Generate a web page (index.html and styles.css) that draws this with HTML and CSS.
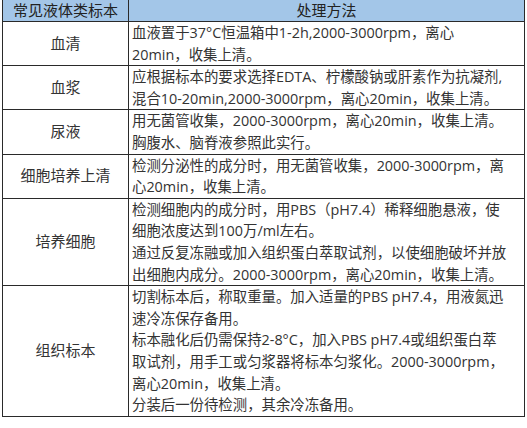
FILE: index.html
```html
<!DOCTYPE html>
<html lang="zh">
<head>
<meta charset="utf-8">
<link rel="stylesheet" href="styles.css">
</head>
<body>
<table class="spec">
  <colgroup><col class="c1"><col class="c2"></colgroup>
  <thead>
    <tr><th>常见液体类标本</th><th>处理方法</th></tr>
  </thead>
  <tbody>
    <tr><td class="name">血清</td><td class="desc">血液置于37°C恒温箱中1-2h,2000-3000rpm，离心<br>20min，收集上清。</td></tr>
    <tr><td class="name">血浆</td><td class="desc">应根据标本的要求选择EDTA、柠檬酸钠或肝素作为抗凝剂,<br>混合10-20min,2000-3000rpm，离心20min，收集上清。</td></tr>
    <tr><td class="name">尿液</td><td class="desc">用无菌管收集，2000-3000rpm，离心20min，收集上清。<br>胸腹水、脑脊液参照此实行。</td></tr>
    <tr><td class="name">细胞培养上清</td><td class="desc">检测分泌性的成分时，用无菌管收集，2000-3000rpm，离<br>心20min，收集上清。</td></tr>
    <tr><td class="name">培养细胞</td><td class="desc">检测细胞内的成分时，用PBS（pH7.4）稀释细胞悬液，使<br>细胞浓度达到100万/ml左右。<br>通过反复冻融或加入组织蛋白萃取试剂，以使细胞破坏并放<br>出细胞内成分。2000-3000rpm，离心20min，收集上清。</td></tr>
    <tr><td class="name">组织标本</td><td class="desc">切割标本后，称取重量。加入适量的PBS pH7.4，用液氮迅<br>速冷冻保存备用。<br>标本融化后仍需保持2-8°C，加入PBS pH7.4或组织蛋白萃<br>取试剂，用手工或匀浆器将标本匀浆化。2000-3000rpm，<br>离心20min，收集上清。<br>分装后一份待检测，其余冷冻备用。</td></tr>
  </tbody>
</table>
</body>
</html>
```
FILE: styles.css
```css
html, body {
  margin: 0;
  padding: 0;
  background: #ffffff;
}
body {
  padding: 0 0 0 2px;
  font-family: "Open Sans", "Noto Sans CJK SC", sans-serif;
  color: #333333;
}
.spec {
  border-collapse: collapse;
  width: 522px;
  table-layout: fixed;
}
.c1 { width: 126px; }
.c2 { width: 396px; }
.spec th {
  background: #a3c6e8;
  color: #222222;
  font-weight: normal;
  font-size: 15px;
  height: 21px;
  line-height: 21px;
  padding: 0;
  text-align: center;
  border-left: 1px solid #2a2a2a;
  border-right: 1px solid #2a2a2a;
  border-bottom: 1px solid #2a2a2a;
}
.spec td {
  border: 1px solid #2a2a2a;
  padding: 0;
  vertical-align: middle;
  line-height: 21.6px;
}
.name {
  text-align: center;
  font-size: 15px;
}
.desc {
  font-size: 14.4px;
  padding: 0 0 0 3px !important;
  white-space: nowrap;
}
```
